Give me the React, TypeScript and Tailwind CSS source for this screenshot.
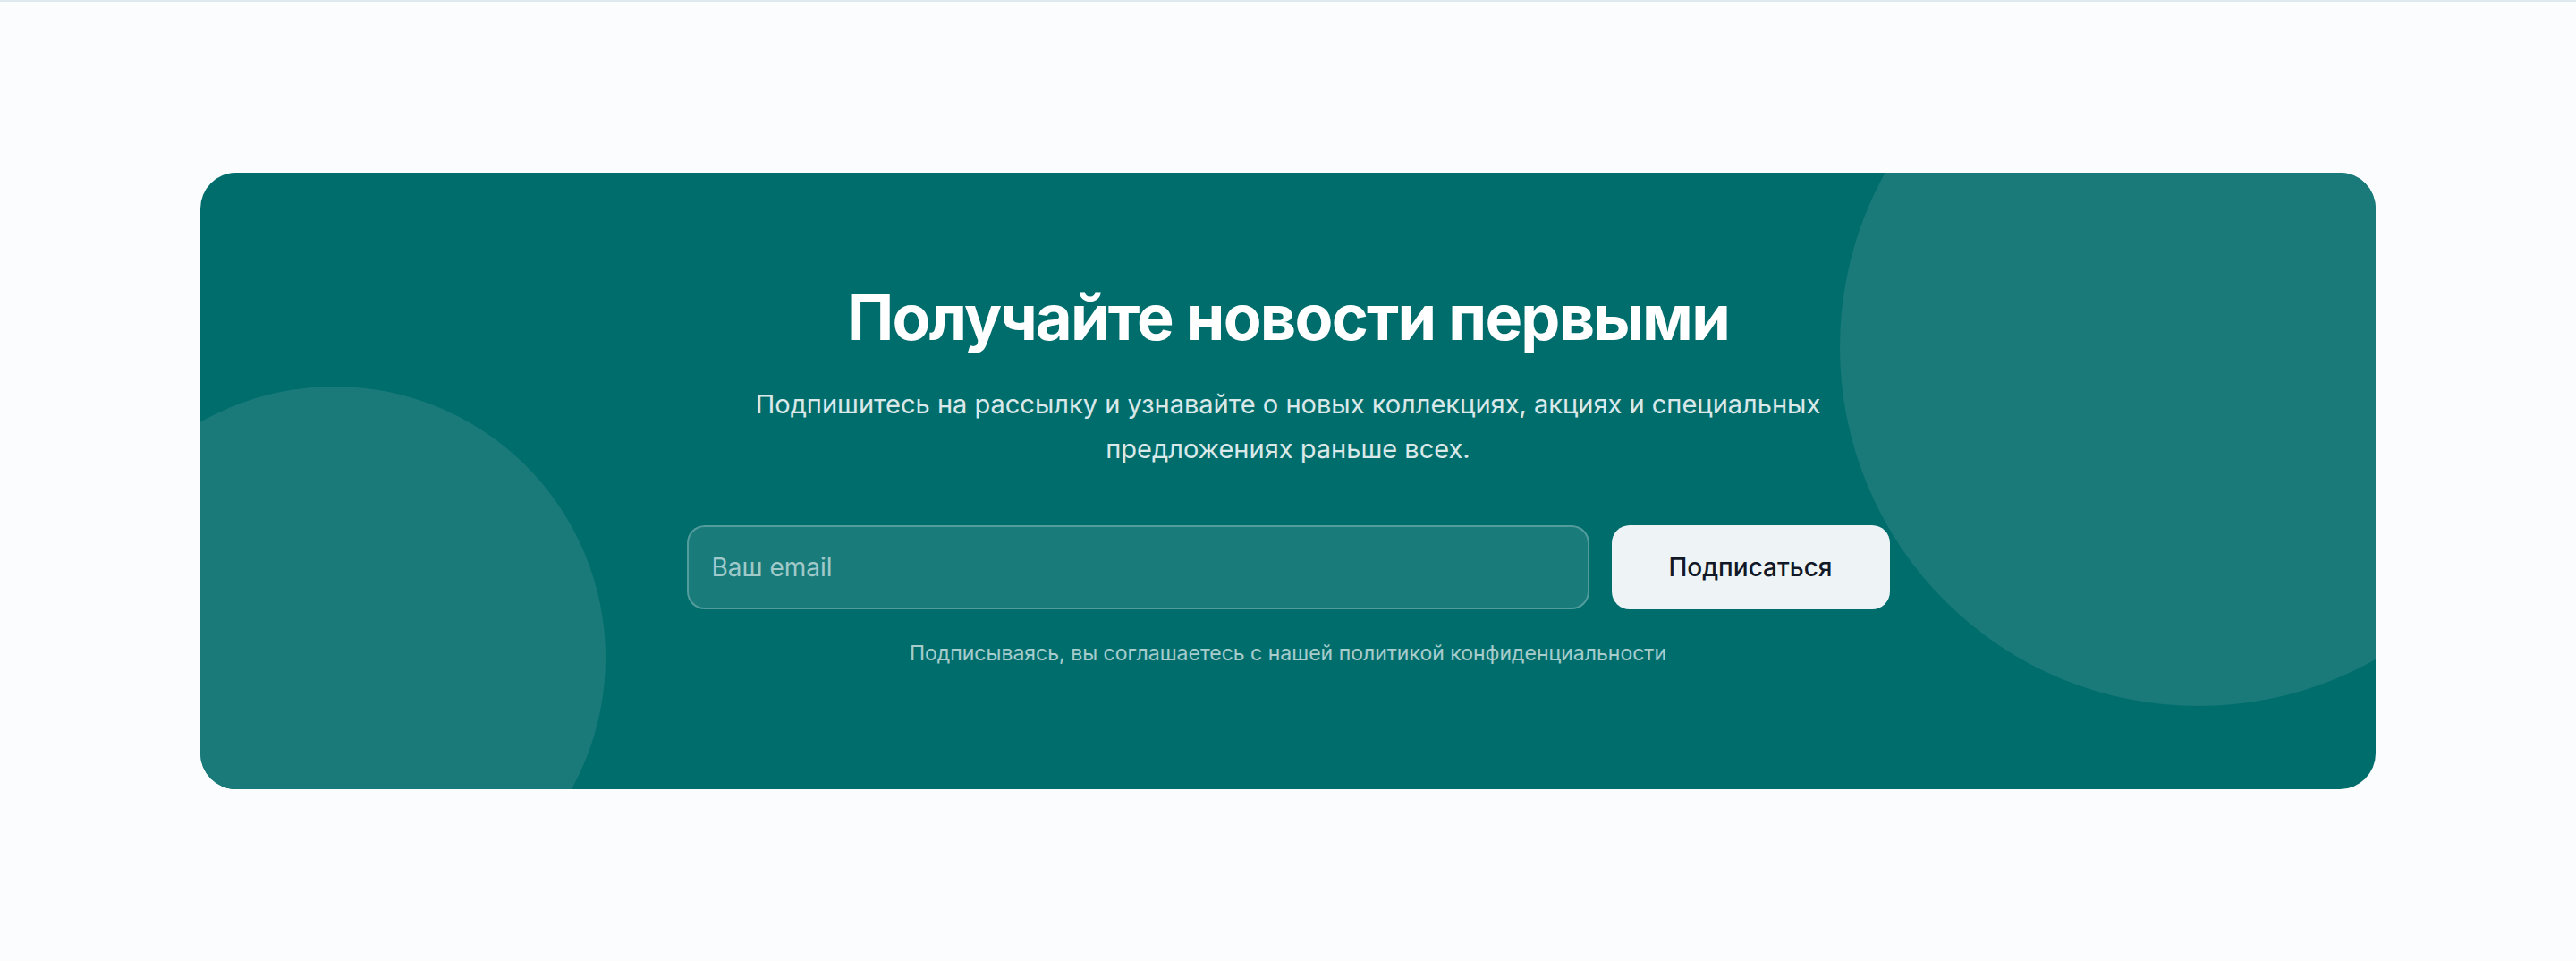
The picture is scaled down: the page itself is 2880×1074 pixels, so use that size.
export default function App() {
  return (
    <div className="min-h-[1074px] w-full bg-[#fbfcfe] border-t-2 border-[#dde9ec]" style={{ fontFamily: "Inter, 'Noto Sans', sans-serif" }}>
      <div className="px-[224px] pt-[191px]">
        <div className="relative h-[689px] overflow-hidden rounded-[40px] bg-[#006d6d]">
          <div className="absolute left-[-153px] top-[239px] h-[606px] w-[606px] rounded-full bg-[#1a7a79]" />
          <div className="absolute left-[1833px] top-[-206px] h-[802px] w-[802px] rounded-full bg-[#1a7a79]" />
          <div className="relative flex flex-col items-center pt-[118px]">
            <h2 className="text-[70px] font-bold leading-[88px] tracking-[-0.025em] text-white">Получайте новости первыми</h2>
            <p className="mt-[28px] max-w-[1340px] text-center text-[29px] leading-[50px] text-white/85">
              Подпишитесь на рассылку и узнавайте о новых коллекциях, акциях и специальных предложениях раньше всех.
            </p>
            <div className="mt-[60px] flex w-[1345px] gap-[25px]">
              <input
                placeholder="Ваш email"
                className="h-[94px] flex-1 rounded-[20px] border-2 border-white/25 bg-white/10 px-[26px] text-[28px] text-white outline-none placeholder:text-white/60"
              />
              <button className="h-[94px] w-[311px] rounded-[20px] bg-[#eef3f6] text-[28px] font-medium text-[#111827]">Подписаться</button>
            </div>
            <p className="mt-[32px] text-[23px] text-white/65">Подписываясь, вы соглашаетесь с нашей политикой конфиденциальности</p>
          </div>
        </div>
      </div>
    </div>
  );
}
